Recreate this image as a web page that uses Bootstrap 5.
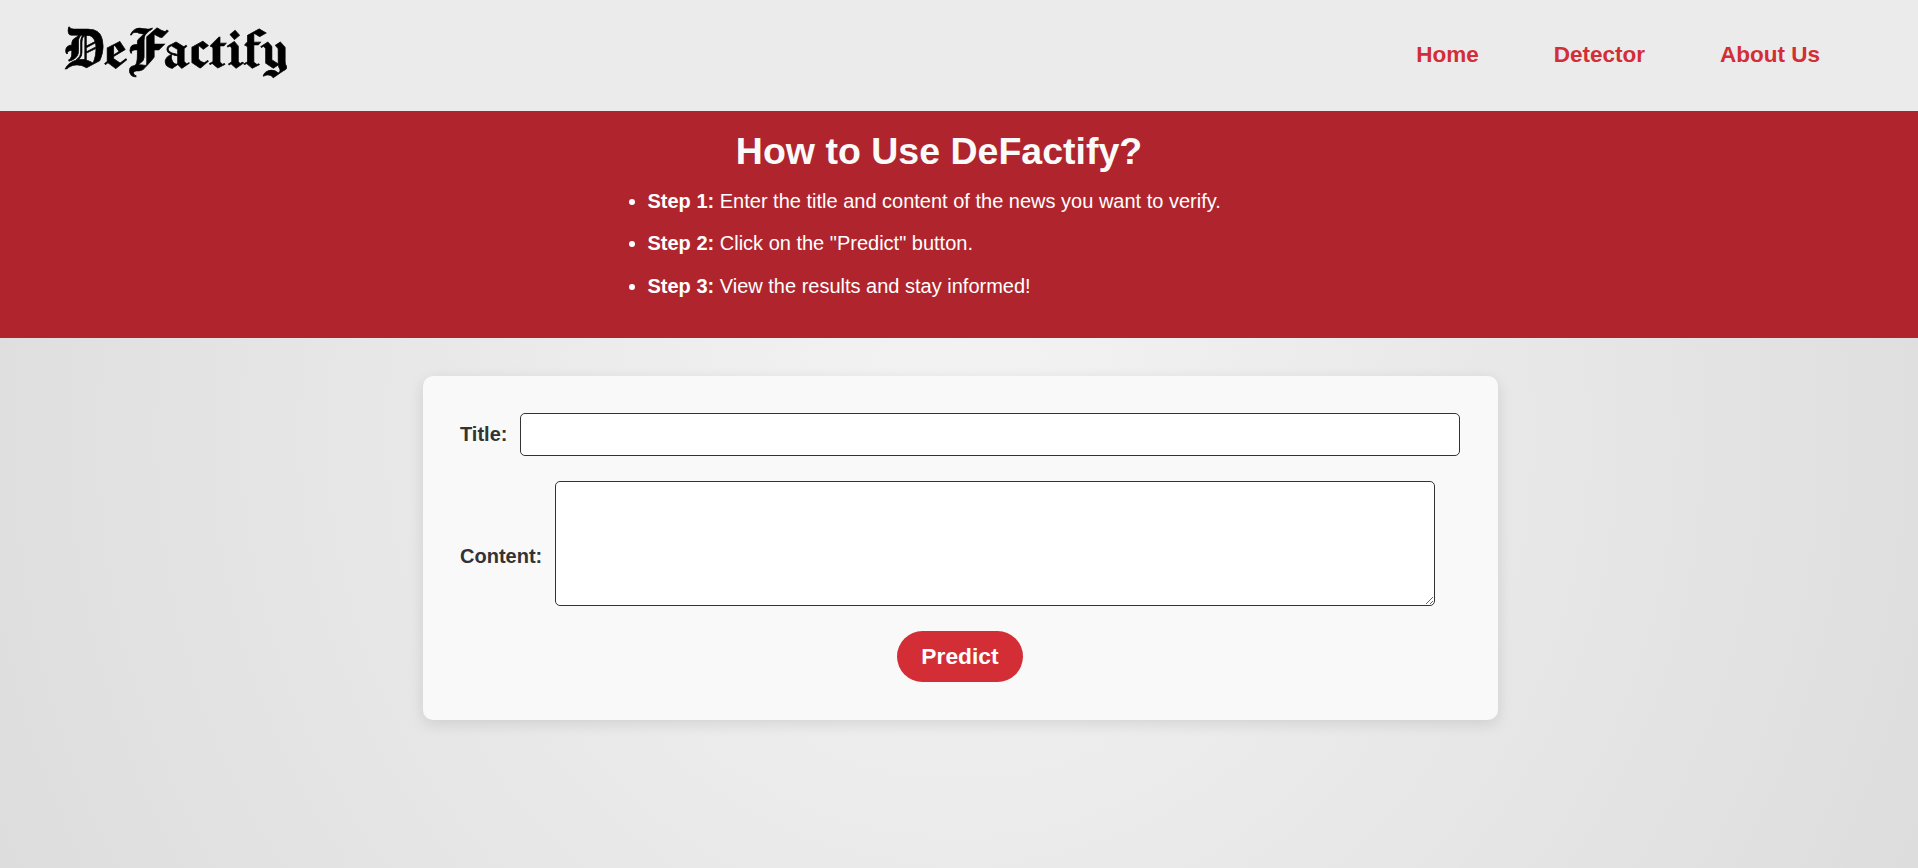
<!DOCTYPE html>
<html lang="en">
<head>
<meta charset="utf-8">
<meta name="viewport" content="width=device-width, initial-scale=1">
<title>DeFactify</title>
<link href="https://cdn.jsdelivr.net/npm/bootstrap@5.3.0/dist/css/bootstrap.min.css" rel="stylesheet">
<style>
  body { font-family: "Liberation Sans", Arial, sans-serif; color: #333; line-height: normal; min-height: 100vh; background: radial-gradient(circle at center, #f4f4f4, #ddd) no-repeat; }
  .site-header { height: 111px; background: #ebebeb; padding: 0 98px 0 65px; }
  .logo-word { margin-top: -11px; }
  .logo-word text { font-family: "Old English Text MT", Chomsky, "Manufacturing Consent", "Pirata One", UnifrakturMaguntia, UnifrakturCook, "Liberation Serif", serif; font-size: 61.5px; stroke: #000; stroke-width: .6px; }
  .site-links { gap: 75px; margin-top: -2px; }
  .site-links .nav-link { color: #d32d35; font-size: 22.5px; font-weight: 700; }
  .how-to { height: 227px; background: #b0252d; color: #fafafa; padding: 16px 0 0 607.5px; }
  .how-to h1 { width: 663px; font-size: 37.5px; font-weight: 700; line-height: 48px; margin: 0; }
  .how-to ul { padding-left: 40px; margin-top: 13px; font-size: 20px; line-height: 26px; }
  .how-to li { color: #fff; margin-bottom: 16.4px; }
  .detector { width: 1075px; height: 344px; margin: 38px 0 0 423px; padding: 37px 38px 37px 37px; border-radius: 10px; background: #f9f9f9; box-shadow: 0 4px 15px rgba(0,0,0,.11); gap: 25px; }
  .detector label { font-size: 20px; font-weight: 700; line-height: 23px; }
  .detector .form-control { border: 1px solid #333; border-radius: 5px; background: #fff; }
  #title { width: 940px; height: 43px; }
  #content { width: 880px; height: 125px; min-height: 0; flex: none; margin-left: 13px; }
  .content-row label { padding-top: 25px; }
  .btn-predict { width: 126px; height: 51px; border-radius: 26px; background: #d32d35; color: #fff; font-size: 22.8px; font-weight: 700; line-height: 28px; padding: 0 0 2px; }
</style>
</head>
<body>
<header class="site-header d-flex justify-content-between align-items-center">
  <a class="logo-word" href="#" aria-label="DeFactify home">
    <svg class="d-block overflow-visible" width="223" height="56" viewBox="0 0 223 56">
      <text x="-2.5" y="45.5" textLength="225.5" lengthAdjust="spacingAndGlyphs">DeFactify</text>
    </svg>
  </a>
  <nav class="nav site-links">
    <a class="nav-link p-0" href="#">Home</a>
    <a class="nav-link p-0" href="#">Detector</a>
    <a class="nav-link p-0" href="#">About Us</a>
  </nav>
</header>
<section class="how-to">
  <h1 class="text-center">How to Use DeFactify?</h1>
  <ul class="mb-0">
    <li><strong>Step 1:</strong> Enter the title and content of the news you want to verify.</li>
    <li><strong>Step 2:</strong> Click on the "Predict" button.</li>
    <li><strong>Step 3:</strong> View the results and stay informed!</li>
  </ul>
</section>
<main>
  <form class="detector d-flex flex-column">
    <div class="title-row d-flex align-items-center">
      <label for="title">Title:</label>
      <input id="title" type="text" class="form-control ms-auto">
    </div>
    <div class="content-row d-flex align-items-center">
      <label for="content">Content:</label>
      <textarea id="content" class="form-control"></textarea>
    </div>
    <button type="button" class="btn btn-predict border-0 align-self-center">Predict</button>
  </form>
</main>
<script src="https://cdn.jsdelivr.net/npm/bootstrap@5.3.0/dist/js/bootstrap.bundle.min.js"></script>
</body>
</html>
